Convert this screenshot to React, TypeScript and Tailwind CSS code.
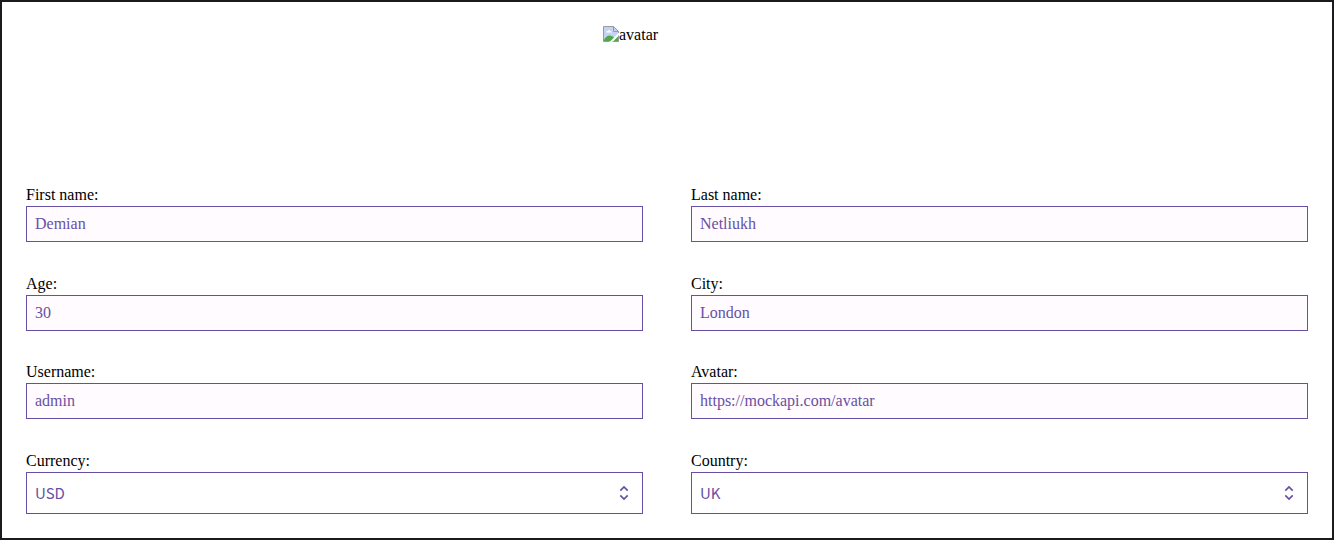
import React from "react";

type FieldProps = { id: string; label: string; value: string };

function TextField({ id, label, value }: FieldProps) {
  return (
    <div className="flex flex-col">
      <label htmlFor={id} className="leading-[22px]">{label}</label>
      <input
        id={id}
        type="text"
        defaultValue={value}
        className="h-9 w-full border border-[#6750a4] bg-[#fffbff] px-2 text-[#6750a4] outline-none"
      />
    </div>
  );
}

function SelectField({ id, label, value, options }: FieldProps & { options: string[] }) {
  return (
    <div className="flex flex-col">
      <label htmlFor={id} className="leading-[22px]">{label}</label>
      <div className="relative">
        <select
          id={id}
          defaultValue={value}
          className="h-[42px] w-full appearance-none border border-[#6750a4] bg-white px-2 font-['Noto_Sans_CJK_JP',sans-serif] text-[15px] text-[#6750a4] outline-none"
        >
          {options.map((option) => (
            <option key={option}>{option}</option>
          ))}
        </select>
        <svg
          viewBox="0 0 20 20"
          className="pointer-events-none absolute top-1/2 right-2 size-5 -translate-y-1/2 fill-none stroke-[#6750a4] stroke-[1.7]"
          aria-hidden="true"
        >
          <path d="M5.3 7.7L9 4l3.7 3.700M5.300 12.300L9 16l3.700-3.700" />
        </svg>
      </div>
    </div>
  );
}

function BrokenImage() {
  return (
    <svg viewBox="0 0 16 16" className="size-4 shrink-0" aria-hidden="true">
      <path d="M.5.5h10l5 5V7L7 15.5H.5z" fill="#c3d3f3" />
      <path d="M3 6.500c0-1 1-1.500 1.500-1 .5-2 3-1.500 3 0 1-.2 1.500.4 1.500 1z" fill="#fff" />
      <path d="M1 15v-1.500C3 11 4.500 9.500 6.500 9.500c2 0 3.500 1 4.500 2L7.500 15z" fill="#52a846" />
      <path d="M15.500 10v5.500H10z" fill="#52a846" />
      <path d="M6.500 15.500h-6V.5h10l5 5V7M10.500.5v5h5" fill="none" stroke="#9a9a9a" />
      <path d="M15.500 9.500v6h-6" fill="none" stroke="#9a9a9a" />
    </svg>
  );
}

export default function App() {
  return (
    <main className="flex min-h-screen flex-col border-2 border-[#1b1b1f] bg-white p-6 font-['Liberation_Serif',serif] text-base text-black">
      <form className="flex grow flex-col">
        <div className="mx-auto mb-[30px] flex h-32 w-32 items-start">
          <BrokenImage />
          <span className="leading-[18px]">avatar</span>
        </div>
        <div className="grid grow grid-cols-2 content-between gap-x-12 gap-y-6">
          <TextField id="first-name" label="First name:" value="Demian" />
          <TextField id="last-name" label="Last name:" value="Netliukh" />
          <TextField id="age" label="Age:" value="30" />
          <TextField id="city" label="City:" value="London" />
          <TextField id="username" label="Username:" value="admin" />
          <TextField id="avatar" label="Avatar:" value="https://mockapi.com/avatar" />
          <SelectField id="currency" label="Currency:" value="USD" options={["USD", "EUR", "GBP"]} />
          <SelectField id="country" label="Country:" value="UK" options={["UK", "USA", "Ukraine"]} />
        </div>
      </form>
    </main>
  );
}
